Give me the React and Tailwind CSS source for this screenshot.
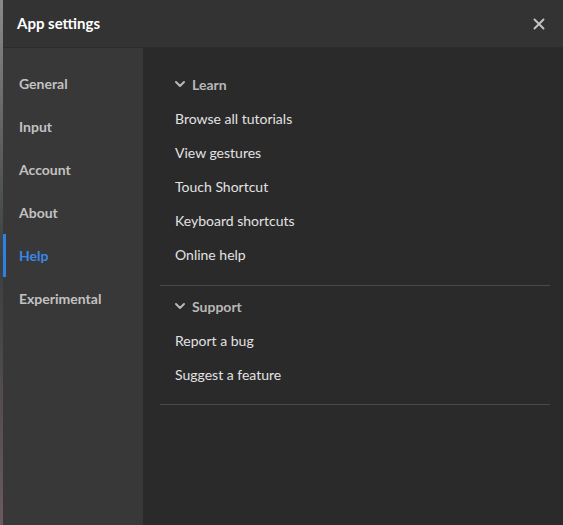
import { ChevronDown, X } from "lucide-react";

const tabs = ["General", "Input", "Account", "About", "Help", "Experimental"];

const sections = [
  {
    title: "Learn",
    items: ["Browse all tutorials", "View gestures", "Touch Shortcut", "Keyboard shortcuts", "Online help"],
  },
  {
    title: "Support",
    items: ["Report a bug", "Suggest a feature"],
  },
];

const App = () => {
  return (
    <div className="flex h-[525px] w-[563px] overflow-hidden bg-[#2a2a2a] font-['Lato',sans-serif]">
      {/* background peeking through on the left */}
      <div className="w-[3px] shrink-0 bg-gradient-to-b from-[#8a8a8a] via-[#3b3f40] to-[#6a5a5e]" />

      <div className="flex flex-1 flex-col">
        <header className="flex h-[48px] shrink-0 items-center justify-between border-b border-[#2c2c2c] bg-[#333333] pl-[14px] pr-[15px]">
          <h1 className="text-[15px] font-bold text-white">App settings</h1>
          <X className="h-[18px] w-[18px] text-[#c4c4c4]" strokeWidth={2.5} />
        </header>

        <div className="flex flex-1">
          <nav className="flex w-[140px] shrink-0 flex-col bg-[#383838] pt-[14px]">
            {tabs.map((t) => (
              <div
                key={t}
                className={
                  t === "Help"
                    ? "flex h-[43px] items-center border-l-[3px] border-[#2f7fe6] pl-[13px] text-[14px] font-bold text-[#3b86ea]"
                    : "flex h-[43px] items-center border-l-[3px] border-transparent pl-[13px] text-[14px] font-bold text-[#c2c2c2]"
                }
              >
                {t}
              </div>
            ))}
          </nav>

          <main className="flex-1 pl-[17px] pr-[13px] pt-[24px]">
            {sections.map((s) => (
              <section key={s.title} className="mb-[8px] border-b border-[#4a4a4a] pb-[14px] last:pb-[13px]">
                <div className="flex h-[24px] items-center gap-[4px] pl-[12px] text-[14px] font-bold text-[#b8b8b8]">
                  <ChevronDown className="h-[16px] w-[16px]" strokeWidth={3} />
                  <span>{s.title}</span>
                </div>
                <ul className="mt-[5px]">
                  {s.items.map((i) => (
                    <li key={i} className="flex h-[34px] items-center pl-[15px] text-[14px] text-[#e2e2e2]">
                      {i}
                    </li>
                  ))}
                </ul>
              </section>
            ))}
          </main>
        </div>
      </div>
    </div>
  );
};

export default App;
